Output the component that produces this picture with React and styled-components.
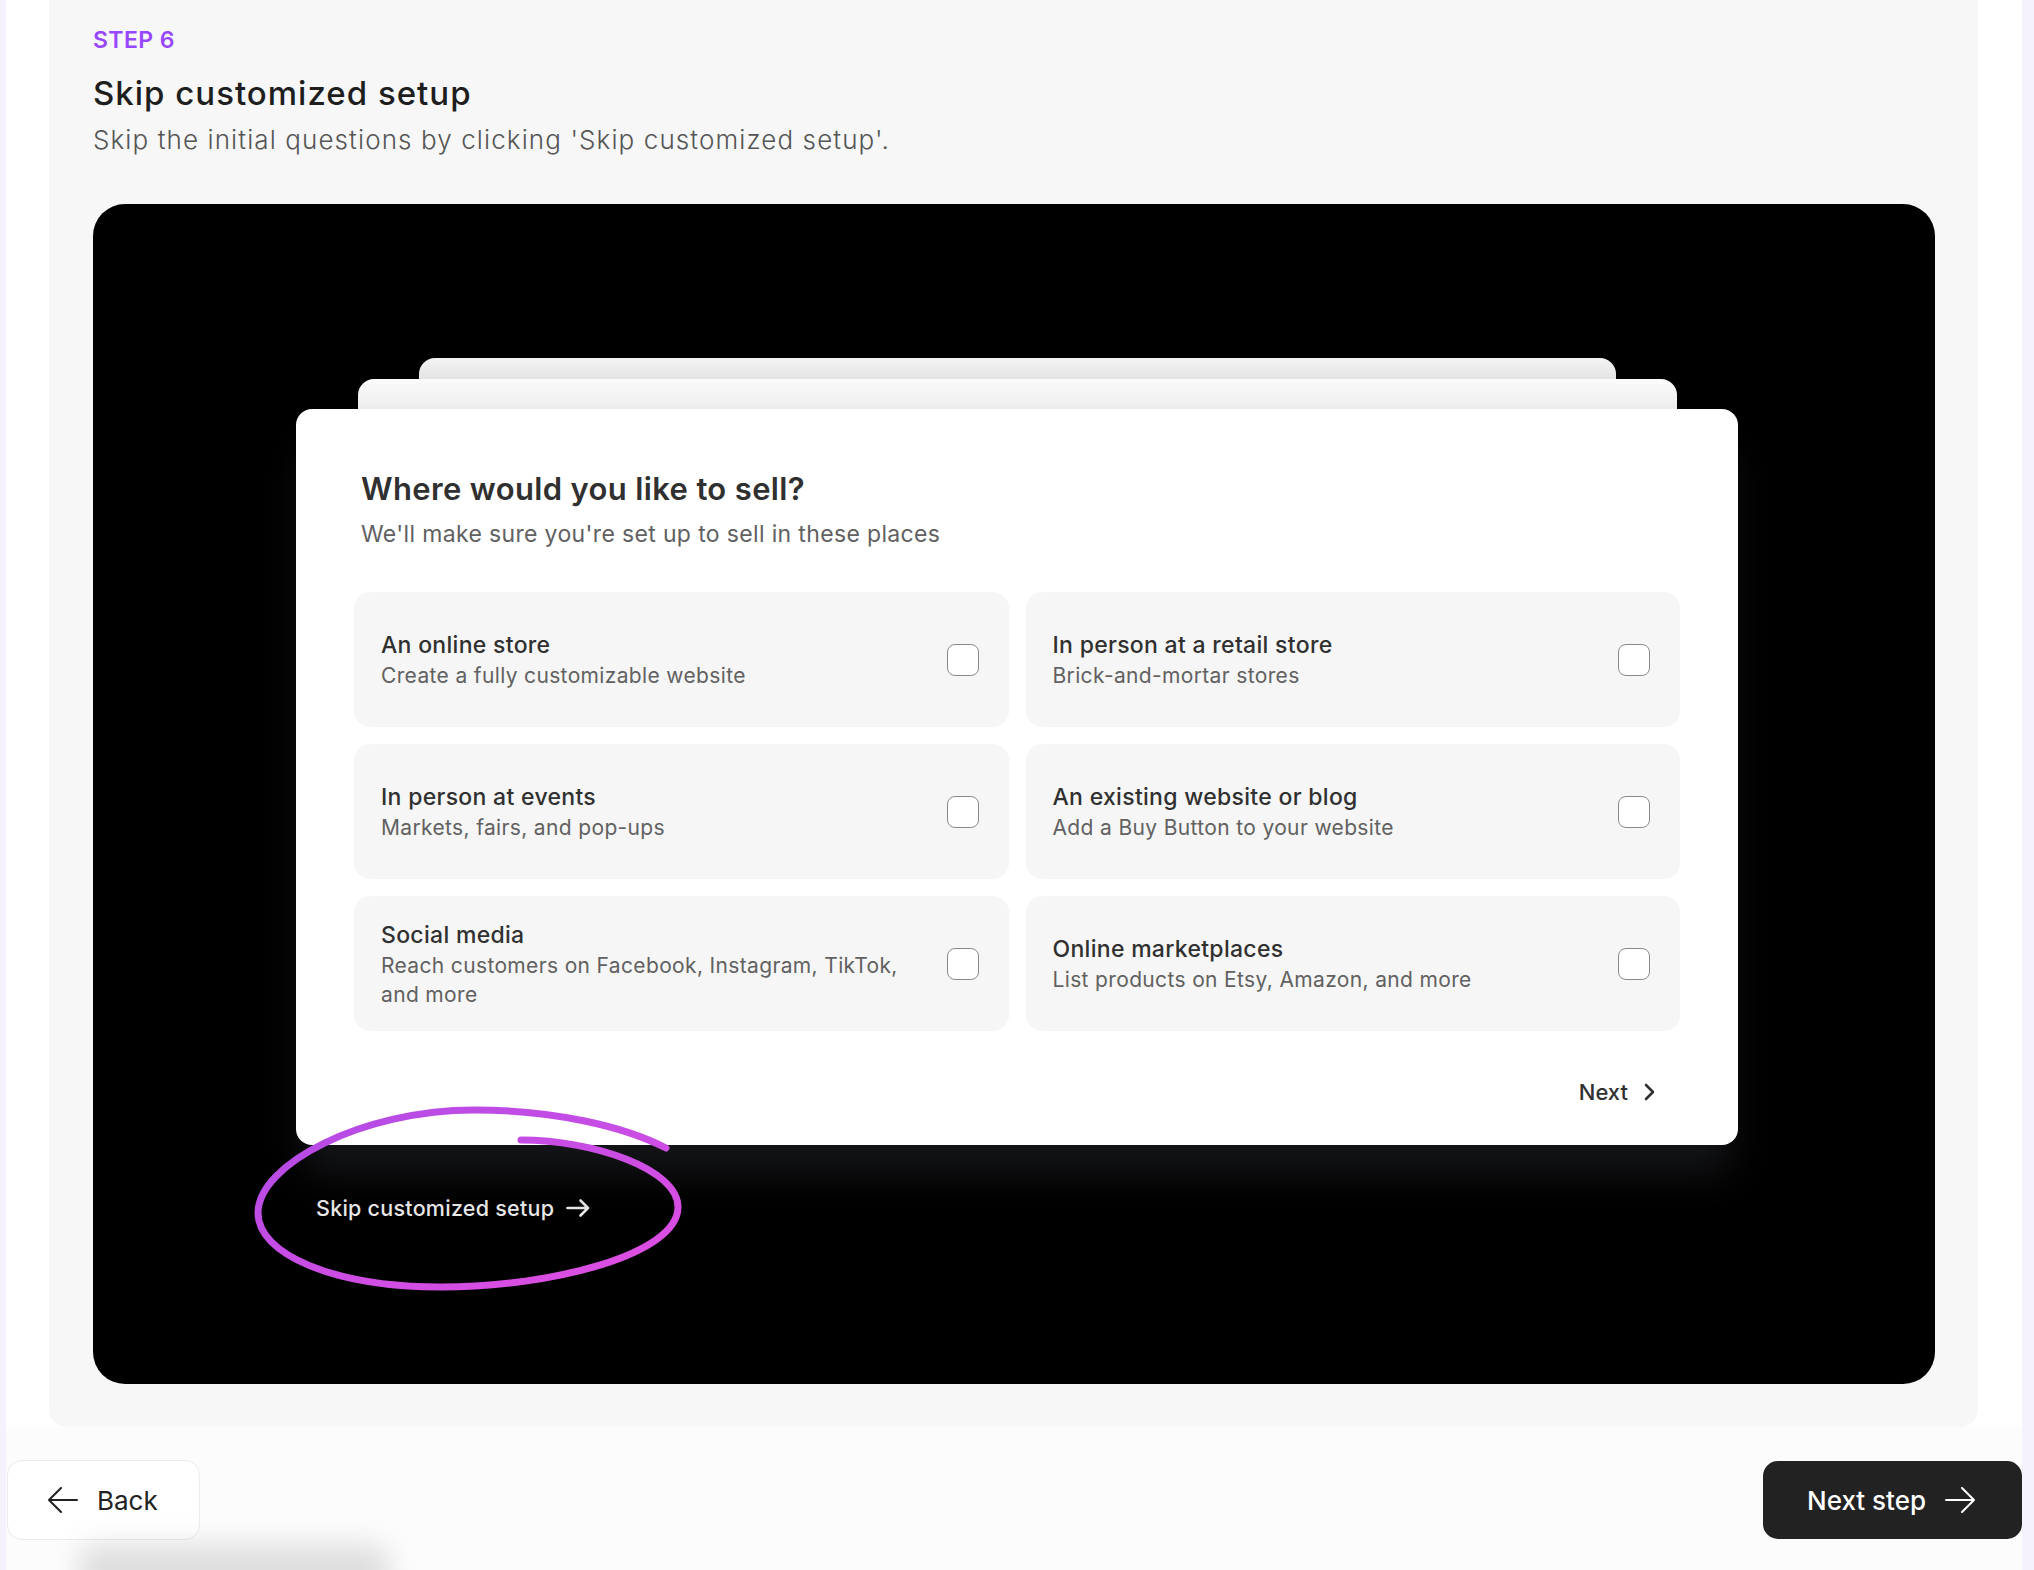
import React from 'react';
import styled, { createGlobalStyle } from 'styled-components';

const places = [
  { title: 'An online store', desc: 'Create a fully customizable website' },
  { title: 'In person at a retail store', desc: 'Brick-and-mortar stores' },
  { title: 'In person at events', desc: 'Markets, fairs, and pop-ups' },
  { title: 'An existing website or blog', desc: 'Add a Buy Button to your website' },
  { title: 'Social media', desc: 'Reach customers on Facebook, Instagram, TikTok, and more' },
  { title: 'Online marketplaces', desc: 'List products on Etsy, Amazon, and more' },
];

const GlobalStyle = createGlobalStyle`
  html, body {
    margin: 0;
    padding: 0;
  }

  body {
    background: #f5f2fd;
    font-family: Inter, 'Noto Sans', sans-serif;
  }

  * {
    box-sizing: border-box;
  }
`;

const Shell = styled.div`
  margin: 0 12px 0 6px;
  min-height: 1570px;
  background: #ffffff;
  display: flex;
  flex-direction: column;
`;

const Panel = styled.section`
  margin: 0 44px 0 43px;
  padding: 26px 43px 43px 44px;
  background: #f7f7f7;
  border-radius: 0 0 18px 18px;
`;

const StepLabel = styled.div`
  font-size: 23px;
  line-height: 28px;
  font-weight: 600;
  letter-spacing: 0.4px;
  color: #9747ff;
`;

const Title = styled.h1`
  margin: 19px 0 0;
  font-size: 33px;
  line-height: 40px;
  font-weight: 500;
  letter-spacing: 1px;
  color: #1e1e1e;
`;

const Subtitle = styled.p`
  margin: 11px 0 0;
  font-size: 26px;
  line-height: 32px;
  font-weight: 300;
  letter-spacing: 1.1px;
  color: #555555;
`;

const Screen = styled.div`
  position: relative;
  margin-top: 48px;
  height: 1180px;
  padding: 154px 0 0 6px;
  background: #000000;
  border-radius: 32px;
  overflow: hidden;
  display: flex;
  flex-direction: column;
  align-items: center;
`;

const Layer = styled.div`
  width: ${p => p.$width}px;
  height: ${p => p.$height}px;
  background: ${p => p.$bg};
  border-radius: 16px 16px 0 0;
`;

const Card = styled.div`
  position: relative;
  width: 1442px;
  height: 736px;
  padding: 62px 58px 38px;
  background: #ffffff;
  border-radius: 16px;
  box-shadow: 0 36px 40px -8px rgba(28, 30, 34, 0.75);
`;

const CardHead = styled.div`
  padding: 0 7px;
`;

const Question = styled.h2`
  margin: 0;
  font-size: 31px;
  line-height: 36px;
  font-weight: 600;
  letter-spacing: 0.35px;
  color: #303030;
`;

const Hint = styled.p`
  margin: 12px 0 0;
  font-size: 23px;
  line-height: 30px;
  letter-spacing: 0.35px;
  color: #616161;
`;

const Options = styled.div`
  margin-top: 43px;
  display: grid;
  grid-template-columns: 1fr 1fr;
  gap: 17px;
`;

const Option = styled.div`
  height: 135px;
  padding: 0 30px 0 27px;
  background: #f6f6f6;
  border-radius: 16px;
  display: flex;
  align-items: center;
  justify-content: space-between;
  gap: 24px;
`;

const OptionText = styled.div`
  max-width: 530px;
`;

const OptionTitle = styled.div`
  font-size: 23px;
  line-height: 32px;
  font-weight: 500;
  letter-spacing: 0.3px;
  color: #303030;
`;

const OptionDesc = styled.div`
  font-size: 21px;
  line-height: 29px;
  letter-spacing: 0.35px;
  color: #616161;
`;

const Checkbox = styled.span`
  flex-shrink: 0;
  width: 32px;
  height: 32px;
  border: 1.5px solid #8a8a8a;
  border-radius: 8px;
  background: #ffffff;
`;

const CardFooter = styled.div`
  margin-top: 46px;
  padding-right: 25px;
  display: flex;
  justify-content: flex-end;
`;

const NextLink = styled.span`
  display: flex;
  align-items: center;
  gap: 16px;
  font-size: 22px;
  line-height: 30px;
  font-weight: 500;
  color: #303030;
`;

const SkipRow = styled.div`
  width: 1442px;
  margin-top: 49px;
  padding-left: 20px;
  display: flex;
  align-items: center;
  gap: 12px;
  font-size: 21.5px;
  line-height: 28px;
  font-weight: 500;
  letter-spacing: 0.25px;
  color: #ececec;
`;

const Scribble = styled.svg`
  position: absolute;
  left: 150px;
  top: 890px;
  width: 450px;
  height: 210px;
  overflow: visible;
`;

const Footer = styled.footer`
  position: relative;
  flex: 1;
  padding: 33px 0 30px 1px;
  background: #fcfcfc;
  display: flex;
  justify-content: space-between;
  align-items: flex-start;
`;

const GhostToast = styled.div`
  position: absolute;
  left: 72px;
  top: 118px;
  width: 312px;
  height: 50px;
  border-radius: 20px;
  background: rgba(0, 0, 0, 0.12);
  filter: blur(14px);
`;

const NavButton = styled.button`
  height: ${p => (p.$primary ? 78 : 80)}px;
  width: ${p => (p.$primary ? 259 : 193)}px;
  padding: 0 0 0 ${p => (p.$primary ? 44 : 40)}px;
  margin-top: ${p => (p.$primary ? 1 : 0)}px;
  border: ${p => (p.$primary ? 'none' : '1.5px solid #ebebeb')};
  border-radius: 15px;
  background: ${p => (p.$primary ? '#222222' : '#ffffff')};
  color: ${p => (p.$primary ? '#ffffff' : '#222222')};
  font-family: Inter, 'Noto Sans', sans-serif;
  font-size: 26px;
  font-weight: ${p => (p.$primary ? 500 : 400)};
  display: flex;
  align-items: center;
  gap: 19px;
  cursor: pointer;
`;

const LongArrow = ({ left, color }) => (
  <svg width="30" height="26" viewBox="0 0 30 26" fill="none" stroke={color} strokeWidth="2" strokeLinecap="round" strokeLinejoin="round">
    {left ? (
      <path d="M29 13H1M13 1L1 13L13 25" />
    ) : (
      <path d="M1 13H29M17 1L29 13L17 25" />
    )}
  </svg>
);

const SmallArrow = () => (
  <svg width="24" height="18" viewBox="0 0 24 18" fill="none" stroke="#ececec" strokeWidth="2.6" strokeLinecap="round" strokeLinejoin="round">
    <path d="M1.5 9H22M14.5 1.5L22 9L14.5 16.5" />
  </svg>
);

const Chevron = () => (
  <svg width="11" height="18" viewBox="0 0 11 18" fill="none" stroke="#303030" strokeWidth="2.6" strokeLinecap="round" strokeLinejoin="round">
    <path d="M2 2L9 9L2 16" />
  </svg>
);

export default function App() {
  return (
    <>
      <GlobalStyle />
      <Shell>
        <Panel>
          <StepLabel>STEP 6</StepLabel>
          <Title>Skip customized setup</Title>
          <Subtitle>Skip the initial questions by clicking 'Skip customized setup'.</Subtitle>
          <Screen>
            <Layer $width={1197} $height={21} $bg="linear-gradient(#f4f4f4, #e4e4e4)" />
            <Layer $width={1319} $height={30} $bg="linear-gradient(#fbfbfb, #ededed)" />
            <Card>
              <CardHead>
                <Question>Where would you like to sell?</Question>
                <Hint>We'll make sure you're set up to sell in these places</Hint>
              </CardHead>
              <Options>
                {places.map(item => (
                  <Option key={item.title}>
                    <OptionText>
                      <OptionTitle>{item.title}</OptionTitle>
                      <OptionDesc>{item.desc}</OptionDesc>
                    </OptionText>
                    <Checkbox />
                  </Option>
                ))}
              </Options>
              <CardFooter>
                <NextLink>Next <Chevron /></NextLink>
              </CardFooter>
            </Card>
            <SkipRow>
              Skip customized setup <SmallArrow />
            </SkipRow>
            <Scribble viewBox="0 0 450 210" fill="none">
              <defs>
                <linearGradient id="pen" x1="0" y1="0" x2="1" y2="1">
                  <stop offset="0" stopColor="#b04be6" />
                  <stop offset="1" stopColor="#e24fe2" />
                </linearGradient>
              </defs>
              <path
                d="M278 46 C350 46, 435 75, 435 113 C435 160, 310 193, 198 193 C90 193, 15 160, 15 119 C15 70, 120 16, 231 16 C310 16, 380 32, 423 54"
                stroke="url(#pen)"
                strokeWidth="7"
                strokeLinecap="round"
              />
            </Scribble>
          </Screen>
        </Panel>
        <Footer>
          <GhostToast />
          <NavButton>
            <LongArrow left color="#222222" />
            Back
          </NavButton>
          <NavButton $primary>
            Next step
            <LongArrow color="#ffffff" />
          </NavButton>
        </Footer>
      </Shell>
    </>
  );
}
